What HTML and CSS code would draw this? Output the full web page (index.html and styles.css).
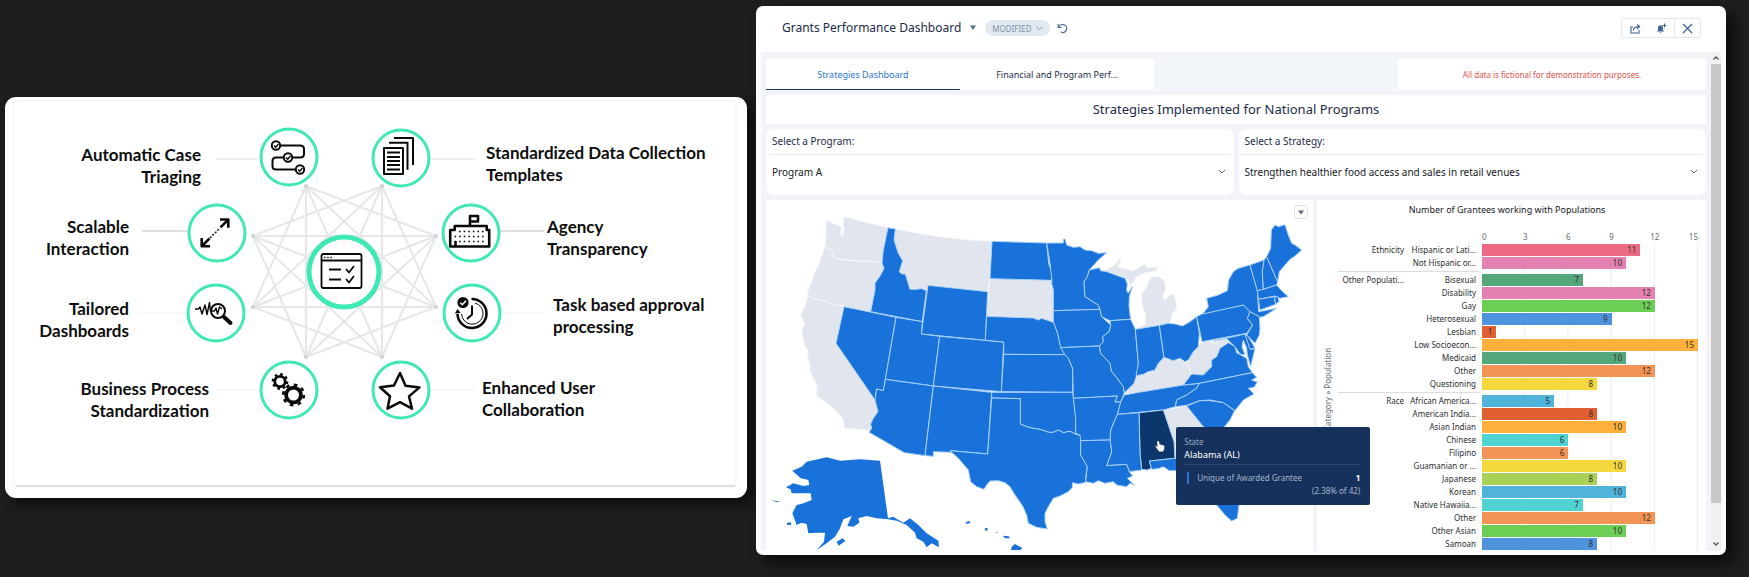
FILE: index.html
```html
<!DOCTYPE html>
<html lang="en">
<head>
<meta charset="utf-8">
<title>Grants Performance Dashboard</title>
<link rel="stylesheet" href="styles.css">
</head>
<body>
<main class="page">
  <section class="slide">
    <svg class="diagram" viewBox="5 97 742 401" role="img" aria-label="Platform capabilities">
      <rect class="frame-shadow" x="16" y="484" width="719" height="3"/>
      <rect class="frame" x="14" y="101" width="722" height="384"/>
      <g class="mesh">
        <path d="M306 186V357M382 186V357M253 236H436M253 307H436"/>
        <path d="M306 186L436 236M306 186L436 307M306 186L382 357M306 186L253 307"/>
        <path d="M382 186L253 236M382 186L253 307M382 186L306 357M382 186L436 307"/>
        <path d="M253 236L436 307M253 236L382 357M253 236L306 357"/>
        <path d="M436 236L253 307M436 236L306 357M436 236L382 357"/>
        <path d="M253 307L382 357M436 307L306 357"/>
      </g>
      <g class="dots"><circle cx="306" cy="186" r="2"/><circle cx="382" cy="186" r="2"/><circle cx="253" cy="236" r="2"/><circle cx="436" cy="236" r="2"/><circle cx="253" cy="307" r="2"/><circle cx="436" cy="307" r="2"/><circle cx="306" cy="357" r="2"/><circle cx="382" cy="357" r="2"/></g>
      <path class="link" d="M216 159H258M432 159H475"/>
      <path class="link strong" d="M142 231H188M499 231H544"/>
      <path class="link faint" d="M140 313H187M503 313H544M216 390H260M432 390H476"/>
      <g class="ring">
        <circle cx="289" cy="157" r="28"/><circle cx="401" cy="158" r="28"/>
        <circle cx="217" cy="233" r="28"/><circle cx="471" cy="233" r="28"/>
        <circle cx="216" cy="313" r="28"/><circle cx="472" cy="313" r="28"/>
        <circle cx="289" cy="390" r="28"/><circle cx="401" cy="390" r="28"/>
        <circle class="hub" cx="344" cy="272" r="35"/>
      </g>
      <!-- workflow -->
      <g class="ink">
        <path d="M281 145.500H300Q304 145.500 304 149V154Q304 157.500 300 157.500H293M283 157.500H276Q272.500 157.500 272.500 161V166Q272.500 169.500 276 169.500H295"/>
        <circle cx="276" cy="145.500" r="4.200"/><circle cx="288" cy="157.500" r="4.200"/><circle cx="300" cy="169.500" r="4.200"/>
        <path class="thin" d="M274 145.500l1.700 1.700 2.800-3.200M286 157.500l1.700 1.700 2.800-3.200M298 169.500l1.700 1.700 2.800-3.200"/>
      </g>
      <!-- documents -->
      <g class="ink">
        <path d="M384 148h19v26h-19zM387 152.500h13M387 157h13M387 161h13M387 165h13M387 169.500h13M394 138h19v27M389 142.800h18.500v27"/>
      </g>
      <!-- arrows -->
      <g class="ink">
        <path class="bold" d="M220 219.500h8.300v8.300M228 219.800l-7.500 7.500M210 246.200h-8.300v-8.300M202 246l7.500-7.500"/>
        <path class="thin" stroke-dasharray="2 1.500" d="M210 238l10-10"/>
      </g>
      <!-- agency building -->
      <g class="ink">
        <path class="bold" d="M450.200 246.500V230h4.500v-4h32v4h2.500v16.500zM470 225V216h8v5.500h-7M455.500 246v-5"/>
        <path class="thin" stroke-dasharray="1.600 3" d="M459 231.500h26M454.500 236.500h32M454.500 241.500h32"/>
      </g>
      <!-- pulse under a magnifier -->
      <g class="ink">
        <path class="thin" d="M195 309h3.500l1.500-2 2 7 3-9 2 9.500 2.500-12 1 9"/>
        <circle cx="218" cy="311" r="7"/>
        <path class="thin" d="M212 311l2.500 0 1.500-3 1.500 6 2-7 2.500 2"/>
        <path class="handle" d="M224 317l6.500 6"/>
      </g>
      <!-- clock with approval mark -->
      <g class="ink">
        <path class="bold" d="M471.500 299A14.500 14.500 0 1 1 457.500 314"/>
        <path class="hair" d="M475 303A10.800 10.800 0 1 1 461.500 314"/>
        <path d="M472 305.500v9l-5 4.500"/>
        <circle class="solid" cx="463" cy="302.500" r="5.600"/>
        <path class="solid" d="M454.800 313.500l2.700-4.500 3.200 4z"/>
        <path class="tick" d="M460.300 302.700l2 2 3.700-4"/>
      </g>
      <!-- gears -->
      <g class="gears">
        <circle cx="280" cy="381.500" r="5.200"/><circle class="teeth" cx="280" cy="381.500" r="7.100" stroke-dasharray="2.500 3.080"/>
        <circle class="big" cx="293.500" cy="395" r="7.400"/><circle class="teeth" cx="293.500" cy="395" r="10.300" stroke-dasharray="3.600 4.490"/>
      </g>
      <!-- star -->
      <path class="star" d="M400 373l5.500 12.700 14 1.700-10.500 9 3 12.300-12-6.500-12.500 6.500 2.500-12.500-10-9 14-1.700z"/>
      <!-- task window -->
      <g class="ink hub-icon">
        <rect x="321.500" y="254" width="40" height="34" rx="2"/>
        <path d="M321.500 260.500h40M329 269.500h12M329 279.500h12M346 269l3 3.500 5-6.500M346 279l3 3.500 5-6.500"/>
        <path class="thin" stroke-dasharray="1.500 1.700" d="M324 257.500h9"/>
      </g>
      <g class="labels end">
        <text x="201" y="161">Automatic Case</text><text x="201" y="183">Triaging</text>
        <text x="129" y="233">Scalable</text><text x="129" y="255">Interaction</text>
        <text x="129" y="315">Tailored</text><text x="129" y="337">Dashboards</text>
        <text x="209" y="395">Business Process</text><text x="209" y="417">Standardization</text>
      </g>
      <g class="labels">
        <text x="486" y="159">Standardized Data Collection</text><text x="486" y="181">Templates</text>
        <text x="547" y="233">Agency</text><text x="547" y="255">Transparency</text>
        <text x="553" y="311">Task based approval</text><text x="553" y="333">processing</text>
        <text x="482" y="394">Enhanced User</text><text x="482" y="416">Collaboration</text>
      </g>
    </svg>
  </section>

  <section class="window">
    <header class="topbar">
      <h1>Grants Performance Dashboard</h1>
      <button class="plain" aria-label="Dashboard menu"><svg width="8" height="6" viewBox="0 0 8 6"><path d="M1 0.500h6L4 5z" fill="#54698d"/></svg></button>
      <button class="pill">MODIFIED <svg width="7" height="5" viewBox="0 0 7 5"><path d="M.5 .8l3 3 3-3" fill="none" stroke="#7f93ad"/></svg></button>
      <button class="plain" aria-label="Undo"><svg width="11" height="11" viewBox="0 0 11 11"><path d="M1.200 1v3.500h3.500M1.500 4.200C3.300 1.500 6 1 8 2.300c2.300 1.500 2.300 4.600.4 6.200C7 9.700 5 9.700 3.800 9" fill="none" stroke="#4a6f9c" stroke-width="1.200"/></svg></button>
      <div class="actions">
        <button aria-label="Share"><svg width="11" height="11" viewBox="0 0 11 11"><path d="M3 4H1v6h8V7M3.200 7.500C3.500 5 5 3.600 9 3.600M7 1.300l2.700 2.300L7 6" fill="none" stroke="#3f6590" stroke-width="1.100"/></svg></button>
        <button aria-label="Notifications"><svg width="11" height="11" viewBox="0 0 11 11"><path d="M1 8.500L2 7V5C2 3 3.200 2.300 4.500 2.300S7 3.300 7 5v2l1 1.500zM3.500 9.200h2l-1 1z" fill="#3f6590"/><path d="M8.500 .5v4M6.500 2.500h4" stroke="#3f6590"/></svg></button>
        <button class="close" aria-label="Close"><svg width="11" height="11" viewBox="0 0 11 11"><path d="M1 1l9 9M10 1l-9 9" stroke="#3f6590" stroke-width="1.400"/></svg></button>
      </div>
    </header>

    <div class="viewport">
      <div class="content">
        <nav class="tabs">
          <a class="tab active" href="#strategies">Strategies Dashboard</a>
          <a class="tab" href="#financial">Financial and Program Perf...</a>
          <span class="spacer"></span>
          <p class="notice">All data is fictional for demonstration purposes.</p>
        </nav>
        <h2 class="heading">Strategies Implemented for National Programs</h2>
        <div class="filters">
          <div class="filter">
            <label for="program">Select a Program:</label>
            <select id="program"><option>Program A</option></select>
          </div>
          <div class="filter">
            <label for="strategy">Select a Strategy:</label>
            <select id="strategy"><option>Strengthen healthier food access and sales in retail venues</option></select>
          </div>
        </div>
        <div class="panels">
          <section class="map-panel">
            <svg class="map" viewBox="18 0 1641 1050" role="img" aria-label="Map of awarded grantees by state">
              <g class="off">
                <path d="M198 60L222 72 240 78 244 84 240 105 248 106 252 90 250 68 252 50 320 68 384 83 370 150 366 190 330 183 300 184 250 178 222 172 215 148 194 140 198 110Z"/>
                <path d="M194 142L214 148 222 172 250 180 300 185 330 184 366 190 372 205 350 245 345 270 332 335 250 320 144 290 142 278 155 245 165 215 178 190Z"/>
                <path d="M144 290L250 320 228 430 345 600 354 635 340 655 330 690 254 685 250 660 240 645 215 620 195 605 170 587 172 560 160 535 150 510 150 490 142 470 146 452 135 440 125 400 133 370 122 345 135 315Z"/>
                <path d="M406 87Q550 118 694 124L690 236 683 275 504 256 499 272 485 266 468 268 450 268 436 222 425 222 418 215 428 182 415 160 402 120Z"/>
                <path d="M690 236L875 241 876 262 880 270 880 335 882 366 866 362 845 355 835 360 820 354 680 349Z"/>
                <g transform="translate(810 0)">
                  <path d="M316 386L345 376 348 345 335 310 335 280 350 262 358 240 365 230 385 230 402 240 408 265 398 290 405 300 420 285 432 283 440 310 438 330 425 345 420 372 388 376Z"/>
                  <path d="M222 212L250 198 268 178 275 182 262 200 290 208 310 212 345 192 352 204 380 200 380 212 345 218 320 230 310 245 300 258 294 240 270 228Z"/>
                  <path d="M283 582L292 560 312 550 320 525 340 523 375 510 385 490 402 474 420 478 450 478 470 488 485 520 460 555 320 578Z"/>
                  <path d="M508 430L540 422 548 430 590 415 595 425 570 445 560 470 545 480 545 500 520 525 500 525 485 520 470 490 475 480 490 455 505 440Z"/>
                  <path d="M400 630L470 618 520 680 560 720 540 770 435 775 430 720Z"/>
                </g>
              </g>
              <g class="on">
                <path d="M384 83L406 87 402 120 415 160 428 182 418 215 425 222 436 222 450 268 468 268 485 266 499 272 487 365 332 335 345 270 345 250 360 228 372 205 366 190 370 150Z"/>
                <path d="M504 256L683 275 676 421 484 402Z"/>
                <path d="M252 320L408 352 376 540 370 572 350 567 345 600 228 430Z"/>
                <path d="M408 352L487 365 484 402 539 409 520 558 376 538Z"/>
                <path d="M539 409L731 426 724 575 520 558Z"/>
                <path d="M376 538L520 558 495 767 433 758 327 697 335 685 332 672 340 655 354 635 345 600 350 567 370 572Z"/>
                <path d="M520 558L695 577 683 762 571 752 575 757 520 755 520 769 495 767Z"/>
                <path d="M696 124L860 129 866 190 875 218 876 241 690 236Z"/>
                <path d="M680 349L820 354 835 360 845 355 866 362 882 368 893 400 903 440 915 464 731 463 731 426 676 421Z"/>
                <path d="M731 463L915 464 925 475 938 505 938 577 724 575Z"/>
                <path d="M695 577L938 577 942 605 948 655 948 703 930 694 910 698 895 690 880 697 866 697 840 688 820 685 800 680 781 672 781 596 695 594Z"/>
                <path d="M695 594L781 596 781 672 800 680 820 685 840 688 866 697 880 697 895 690 910 698 930 694 948 703 962 706 962 765 975 785 982 800 978 825 977 847 955 852 938 848 937 862 925 875 900 888 880 895 865 920 855 940 855 965 862 987 830 982 805 970 800 945 788 918 765 885 750 860 735 848 715 842 690 843 680 855 672 868 650 860 632 845 625 810 595 775 575 757 571 752 683 762Z"/>
                <g transform="translate(810 0)">
                  <path d="M50 129L100 129 100 117 105 117 110 135 130 142 150 140 165 150 185 152 205 160 230 158 205 180 178 210 172 230 162 245 165 290 205 315 210 328 70 332 70 270 65 250 66 241 60 190Z"/>
                  <path d="M70 332L210 328 215 350 242 375 238 395 218 410 220 425 208 438 92 443 83 400 70 365Z"/>
                  <path d="M92 443L208 438 212 460 240 490 245 515 258 530 280 560 283 578 272 606 255 606 262 588 130 595 128 505 115 475 105 464Z"/>
                  <path d="M178 210L208 203 212 212 230 215 260 226 285 235 292 252 290 270 294 280 308 258 298 290 297 320 302 358 240 362 215 350 210 328 205 315 165 290 162 245 172 230Z"/>
                  <path d="M240 362L302 358 316 388 325 490 322 520 312 550 290 572 283 578 280 560 258 530 245 515 240 490 212 460 208 438 220 425 218 410 238 395 242 375Z"/>
                  <path d="M316 388L388 376 402 472 385 490 375 510 355 515 340 523 318 527 325 490Z"/>
                  <path d="M388 376L415 370 435 372 458 378 480 365 500 350 508 400 505 440 490 455 475 480 465 485 450 475 430 482 402 472Z"/>
                  <path d="M283 585L320 578 460 555 508 550 500 565 470 585 440 600 436 620 400 630 262 643 270 610Z"/>
                  <path d="M460 555L485 522 520 525 545 500 545 480 560 470 570 445 595 428 615 440 620 458 650 475 655 500 667 518 508 550Z"/>
                  <path d="M508 550L667 518 680 532 665 540 682 546 672 562 655 565 672 582 640 600 615 632 580 608 540 600 510 602 470 616 436 620 440 600 470 585 500 565Z"/>
                  <path d="M470 618L510 602 540 602 580 608 614 632 600 660 575 690 560 700 520 680Z"/>
                  <path class="selected" d="M327 638L400 630 432 725 435 775 358 783 365 805 350 810 335 808 330 760Z"/>
                  <path d="M262 643L327 638 330 760 335 810 298 815 290 793 230 797 245 755 240 720 242 690Z"/>
                  <path d="M130 595L262 588 255 606 272 606 262 643 250 670 242 690 240 720 152 722 150 705 137 700 137 655Z"/>
                  <path d="M152 722L240 720 245 755 230 797 290 793 298 815 308 828 292 835 315 857 300 850 290 860 260 855 250 845 225 850 205 842 190 850 167 845 172 800 152 765Z"/>
                  <path d="M358 783L435 775 540 770 580 840 600 880 627 915 622 955 605 963 585 945 560 915 520 870 490 820 437 812 418 812 400 800 385 806 365 808Z"/>
                  <path d="M500 350L520 340 640 315 660 335 652 355 668 375 650 400 516 425Z"/>
                  <path d="M518 342L535 320 530 295 565 285 592 272 596 240 610 215 625 205 660 195 682 270 686 335 740 325 700 350 688 352 660 335 640 315Z"/>
                  <path d="M660 335L688 350 690 385 688 405 675 430 650 405 668 375 652 355Z"/>
                  <path d="M660 195L702 180 697 215 700 268 682 272Z"/>
                  <path d="M702 180L710 170 743 245 740 255 700 268 697 215Z"/>
                  <path d="M710 170L722 145 724 90 735 75 745 80 765 74 775 105 785 130 795 135 815 150 795 168 780 178 765 195 748 215 743 245Z"/>
                  <path d="M682 272L700 268 740 255 755 272 775 290 750 295 735 288 685 298Z"/>
                  <path d="M685 298L733 290 737 313 690 330Z"/>
                  <path d="M733 290L745 292 747 305 737 313Z"/>
                  <path d="M548 424L645 402 662 448 675 446 662 500 652 465 650 445 640 420 636 440 645 465 630 462 615 440 590 416Z"/>
                  <path d="M645 402L655 410 675 444 660 448Z"/>
                </g>
                <path class="isle" d="M360 782L384 955 400 950 412 958 430 968 450 955 475 975 500 1000 535 1022 537 1042 515 1030 500 1042 490 1025 470 1015 465 998 440 975 410 962 384 958 350 955 320 948 295 955 298 968 280 980 262 978 275 948 250 958 240 985 225 1010 200 1030 170 1050 192 1025 195 998 170 998 145 1000 140 972 125 968 110 975 97 940 110 915 130 910 155 900 152 880 95 880 92 868 78 862 100 850 130 858 148 855 145 840 122 835 97 812 125 800 140 785 200 772 240 782 300 778Z"/>
                <path class="isle" d="M33 900l28 5-10 2zM80 970l12-4 2 8-12 1zM230 1025l18-10 8 8-20 14zM616 967l12-4 4 6-12 2zM674 983l8 2 2 6-8 1zM728 1007l18 2 4 6-14 0zM755 1040l10-8 22 12-6 6h-28zM708 996l6 2-5 2z"/>
              </g>
              <path class="pointer" transform="translate(1188 720)" d="M6 2c3 0 4 3 5 11l12 3c4 2 3 7 1 13l-3 6H9C6 29 2 26-2 20c-1-3 2-4 4-1l2 2C4 12 1 3 6 2z"/>
            </svg>
            <button class="map-menu" aria-label="Map options"><svg width="6" height="5" viewBox="0 0 6 5"><path d="M0 .5h6L3 4.500z" fill="#5a6475"/></svg></button>
            <div class="tooltip" role="tooltip">
              <p class="muted">State</p>
              <p class="state">Alabama (AL)</p>
              <div class="metric"><span class="swatch"></span><span class="metric-name">Unique of Awarded Grantee</span><b>1</b></div>
              <p class="share">(2.38% of 42)</p>
            </div>
          </section>

          <section class="chart-panel">
            <h3>Number of Grantees working with Populations</h3>
            <div class="axis"><span>0</span><span>3</span><span>6</span><span>9</span><span>12</span><span>15</span></div>
            <div class="chart">
              <p class="axis-title">Category » Population</p>
              <div class="plot-grid"></div>
              <div class="groups">
                <div class="group"><h4>Ethnicity</h4><ul>
                  <li><span>Hispanic or Lati...</span><i class="rose" style="--v:11">11</i></li>
                  <li><span>Not Hispanic or...</span><i class="pink" style="--v:10">10</i></li>
                </ul></div>
                <div class="group"><h4>Other Populati...</h4><ul>
                  <li><span>Bisexual</span><i class="sea" style="--v:7">7</i></li>
                  <li><span>Disability</span><i class="pink" style="--v:12">12</i></li>
                  <li><span>Gay</span><i class="green" style="--v:12">12</i></li>
                  <li><span>Heterosexual</span><i class="blue" style="--v:9">9</i></li>
                  <li><span>Lesbian</span><i class="brick" style="--v:1">1</i></li>
                  <li><span>Low Socioecon...</span><i class="amber" style="--v:15">15</i></li>
                  <li><span>Medicaid</span><i class="sea" style="--v:10">10</i></li>
                  <li><span>Other</span><i class="orange" style="--v:12">12</i></li>
                  <li><span>Questioning</span><i class="yellow" style="--v:8">8</i></li>
                </ul></div>
                <div class="group"><h4>Race</h4><ul>
                  <li><span>African America...</span><i class="sky" style="--v:5">5</i></li>
                  <li><span>American India...</span><i class="brick" style="--v:8">8</i></li>
                  <li><span>Asian Indian</span><i class="amber" style="--v:10">10</i></li>
                  <li><span>Chinese</span><i class="teal" style="--v:6">6</i></li>
                  <li><span>Filipino</span><i class="orange" style="--v:6">6</i></li>
                  <li><span>Guamanian or ...</span><i class="yellow" style="--v:10">10</i></li>
                  <li><span>Japanese</span><i class="lime" style="--v:8">8</i></li>
                  <li><span>Korean</span><i class="sky" style="--v:10">10</i></li>
                  <li><span>Native Hawaiia...</span><i class="teal" style="--v:7">7</i></li>
                  <li><span>Other</span><i class="orange" style="--v:12">12</i></li>
                  <li><span>Other Asian</span><i class="green" style="--v:10">10</i></li>
                  <li><span>Samoan</span><i class="blue" style="--v:8">8</i></li>
                </ul></div>
              </div>
            </div>
          </section>
        </div>
      </div>
      <div class="scrollbar" aria-hidden="true">
        <svg width="10" height="12" viewBox="0 0 10 12"><path d="M2.500 7.500L5 5l2.500 2.500" fill="none" stroke="#555" stroke-width="1.300"/></svg>
        <span class="thumb"></span>
        <svg class="down" width="10" height="12" viewBox="0 0 10 12"><path d="M2.500 3.500L5 6l2.500-2.500" fill="none" stroke="#555" stroke-width="1.300"/></svg>
      </div>
    </div>
  </section>
</main>
</body>
</html>
```
FILE: styles.css
```css
* { box-sizing: border-box; }
body { margin: 0; background: #1e1e1e; font-family: "Noto Sans", "Open Sans", sans-serif; color: #16325c; }
h1, h2, h3, h4, p, ul { margin: 0; padding: 0; font-weight: 400; }
button { font: inherit; color: inherit; background: none; border: 0; padding: 0; display: inline-flex; align-items: center; justify-content: center; }
svg { display: block; flex: none; }

.page { display: grid; grid-template-columns: minmax(0, 742fr) minmax(0, 970fr); align-items: start; gap: 9px; padding: 6px 23px 22px 5px; }

/* capability slide */
.slide { margin-top: 91px; background: #fff; border-radius: 11px; overflow: hidden; box-shadow: 6px 6px 12px #0c0c0c; }
.diagram { width: 100%; height: auto; }
.frame { fill: #fff; stroke: #f1f1f1; }
.frame-shadow { fill: #d8d8d8; }
.mesh { fill: none; stroke: #e8e7e7; stroke-width: 2; }
.dots { fill: #d2d0d0; }
.link { stroke: #dcdcdc; stroke-width: 1; }
.link.strong { stroke: #bcc0be; }
.link.faint { stroke: #f0f0f0; }
.ring { fill: #fff; stroke: #40e8b5; stroke-width: 3; }
.hub { stroke-width: 5; }
.ink { fill: none; stroke: #0a0a0a; stroke-width: 2; stroke-linejoin: round; }
.ink .thin { stroke-width: 1.4; }
.ink .hair { stroke-width: 1; }
.ink .bold { stroke-width: 2.6; }
.ink .handle { stroke-width: 4; stroke-linecap: round; }
.ink .solid { fill: #0a0a0a; stroke: none; }
.ink .tick { stroke: #fff; stroke-width: 1.5; }
.hub-icon { stroke-width: 1.8; }
.gears { fill: none; stroke: #0a0a0a; stroke-width: 2.8; }
.gears .big { stroke-width: 3.8; }
.gears .teeth { stroke-width: 2.6; }
.star { fill: none; stroke: #0a0a0a; stroke-width: 2.5; stroke-linejoin: round; }
.labels { font: 700 17px Lato, sans-serif; fill: #0d0d0d; }
.labels.end { text-anchor: end; }

/* dashboard window */
.window { background: #fff; border-radius: 7px; padding: 0 5px 4px; box-shadow: 8px 8px 14px #0c0c0c; }
.topbar { display: flex; align-items: center; height: 46px; padding: 0 20px 2px 21px; }
.topbar h1 { font-size: 12px; line-height: 16px; color: #1c2b4a; margin-right: 6px; }
.plain { padding: 2px; }
.pill { background: #e3e9f1; color: #7f93ad; border-radius: 8px; height: 16px; padding: 0 7px; gap: 4px; font-size: 8px; margin: 0 5px 0 6px; }
.actions { margin-left: auto; display: flex; border: 1px solid #e3e7ee; border-radius: 3px; }
.actions button { width: 26px; height: 18px; }
.actions .close { border-left: 1px solid #e3e7ee; }

.viewport { display: flex; background: #f3f4f9; }
.content { flex: 1; min-width: 0; padding: 7px 5px 0; }
.tabs { display: flex; height: 31px; background: #f2f5f9; }
.tab { flex: 194 1 0; background: #fff; color: #1c2b4a; font-size: 9px; display: flex; align-items: center; justify-content: center; text-decoration: none; border-bottom: 1px solid #fff; }
.tab.active { color: #2b75cc; border-color: #1b3560; }
.spacer { flex: 244 1 0; }
.notice { flex: 308 1 0; background: #fff; color: #e0504f; font-size: 8px; display: flex; align-items: center; justify-content: center; }
.heading { margin-top: 5px; background: #fff; text-align: center; font-size: 13px; line-height: 29px; color: #1c2b4a; }
.filters { display: grid; grid-template-columns: 1fr 1fr; gap: 5px; margin: 5px 0; }
.filter { background: #fff; border-radius: 8px; padding: 0 3px; height: 66px; }
.filter label { display: block; font-size: 10px; line-height: 25px; padding: 0 3px; border-bottom: 1px solid #e6e9ee; color: #1c2b4a; }
.filter select { display: block; width: 100%; height: 34px; border: 0; padding: 0 3px; font: 10px "Noto Sans", sans-serif; color: #16181d; appearance: none;
  background: #fff url("data:image/svg+xml,%3Csvg xmlns='http://www.w3.org/2000/svg' width='8' height='6'%3E%3Cpath d='M1 1l3 3 3-3' fill='none' stroke='%23667'/%3E%3C/svg%3E") no-repeat right 5px center; }

.panels { display: grid; grid-template-columns: minmax(0, 547fr) minmax(0, 389fr); gap: 4px; }
.map-panel { background: #fff; position: relative; }
.map { width: 100%; height: auto; }
.map path { stroke-width: 3; stroke-linejoin: round; }
.map .off { fill: #e0e5ee; stroke: #f4f6fa; }
.map .on { fill: #1972d9; stroke: #a8d0f8; }
.map .isle { stroke: none; }
.map .selected { fill: #0b376d; }
.map .pointer { fill: #fff; stroke: #333; stroke-width: 1; }
.map-menu { position: absolute; top: 5px; right: 5px; width: 14px; height: 14px; border: 1px solid #dfe3ea; border-radius: 3px; background: #fff; }
.tooltip { position: absolute; z-index: 2; left: 75%; top: 227px; width: 194px; height: 78px; padding: 9px 10px 0 8px; background: #16325c; border-radius: 2px; color: #fff; font-size: 8px; line-height: 12px; }
.tooltip .muted { color: #9aa9c0; }
.tooltip .state { padding-bottom: 2px; border-bottom: 1px solid #2c4670; font-size: 9px; line-height: 14px; }
.metric { display: flex; align-items: center; padding: 7px 0 0 3px; color: #a6b3c8; }
.metric b { margin-left: auto; color: #fff; font-weight: 700; }
.swatch { width: 2px; height: 12px; background: #2b75cc; margin-right: 8px; }
.share { text-align: right; line-height: 14px; color: #a6b3c8; }

.chart-panel { background: #fff; padding: 0 8px 0 5px; }
.chart-panel h3 { text-align: center; font-size: 9px; line-height: 20px; color: #16181d; padding-right: 6px; }
.axis { display: grid; grid-template-columns: 1fr 2fr 2fr 2fr 2fr 1fr; margin-left: 160px; padding-top: 10px; font-size: 8px; line-height: 14px; color: #6b6d70; text-align: center; }
.axis span:first-child { text-align: left; }
.axis span:last-child { text-align: right; }
.chart { display: grid; grid-template-columns: 16px 144px minmax(0, 1fr); }
.axis-title { grid-area: 1 / 1; writing-mode: vertical-rl; transform: rotate(180deg); text-align: center; padding-top: 16px; font-size: 8px; line-height: 12px; color: #6b6d70; }
.plot-grid { grid-area: 1 / 3; background: linear-gradient(to left, #ececef 1px, transparent 1px) 0 0 / 20% 100%; }
.groups { grid-area: 1 / 2 / 2 / 4; }
.group { display: grid; grid-template-columns: 66px minmax(0, 1fr); }
.group + .group { padding-top: 4px; background: linear-gradient(#dddddf, #dddddf) 0 1px / 141px 1px no-repeat; }
.group h4 { font-size: 8px; line-height: 12px; text-align: right; color: #2b2d30; white-space: nowrap; }
.group ul { list-style: none; }
.group li { display: grid; grid-template-columns: 78px minmax(0, 1fr); height: 13px; font-size: 8px; line-height: 12px; color: #2b2d30; }
.group li span { text-align: right; padding-right: 6px; white-space: nowrap; }
.group i { font-style: normal; height: 12px; width: calc(var(--v) / 15 * 100%); text-align: right; padding-right: 4px; color: #33302c; }
.rose { background: #ed6a84; } .pink { background: #e381b0; } .sea { background: #54a77b; }
.green { background: #6bcf55; } .blue { background: #4f93de; } .brick { background: #e06033; }
.amber { background: #feb03c; } .orange { background: #f29455; } .yellow { background: #f5d83e; }
.sky { background: #4fb3da; } .teal { background: #4fd2d2; } .lime { background: #a8d158; }

.scrollbar { width: 10px; background: #f1f1f1; display: flex; flex-direction: column; }
.thumb { flex: 437 1 0; background: #c8c8c8; }
.scrollbar .down { margin-top: 36px; }
```
